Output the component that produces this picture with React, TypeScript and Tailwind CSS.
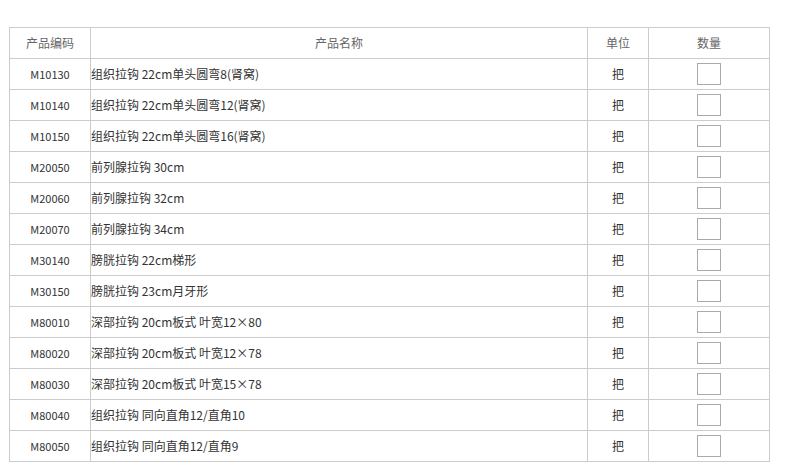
const rows: [string, string][] = [
  ["M10130", "组织拉钩 22cm单头圆弯8(肾窝)"],
  ["M10140", "组织拉钩 22cm单头圆弯12(肾窝)"],
  ["M10150", "组织拉钩 22cm单头圆弯16(肾窝)"],
  ["M20050", "前列腺拉钩 30cm"],
  ["M20060", "前列腺拉钩 32cm"],
  ["M20070", "前列腺拉钩 34cm"],
  ["M30140", "膀胱拉钩 22cm梯形"],
  ["M30150", "膀胱拉钩 23cm月牙形"],
  ["M80010", "深部拉钩 20cm板式 叶宽12×80"],
  ["M80020", "深部拉钩 20cm板式 叶宽12×78"],
  ["M80030", "深部拉钩 20cm板式 叶宽15×78"],
  ["M80040", "组织拉钩 同向直角12/直角10"],
  ["M80050", "组织拉钩 同向直角12/直角9"],
];

export default function App() {
  return (
    <div
      className="min-h-[467px] bg-white pt-[27px] pl-[9px] text-[12px] text-[#333]"
      style={{ fontFamily: '"Noto Sans CJK SC", "Liberation Sans", sans-serif' }}
    >
      <table className="table-fixed border-collapse w-[760px]">
        <colgroup>
          <col className="w-[81px]" />
          <col className="w-[497px]" />
          <col className="w-[61px]" />
          <col className="w-[121px]" />
        </colgroup>
        <thead>
          <tr className="h-[31px] text-[#666]">
            <th className="border border-[#ccc] font-normal p-0">产品编码</th>
            <th className="border border-[#ccc] font-normal p-0">产品名称</th>
            <th className="border border-[#ccc] font-normal p-0">单位</th>
            <th className="border border-[#ccc] font-normal p-0">数量</th>
          </tr>
        </thead>
        <tbody>
          {rows.map(([code, name]) => (
            <tr key={code} className="h-[31px]">
              <td className="border border-[#ccc] p-0 text-center text-[11px]">{code}</td>
              <td className="border border-[#ccc] p-0 text-left">{name}</td>
              <td className="border border-[#ccc] p-0 text-center">把</td>
              <td className="border border-[#ccc] p-0">
                <div className="flex justify-center">
                  <input type="text" className="w-[24px] h-[22px] border border-[#aaa] outline-none" />
                </div>
              </td>
            </tr>
          ))}
        </tbody>
      </table>
    </div>
  );
}
